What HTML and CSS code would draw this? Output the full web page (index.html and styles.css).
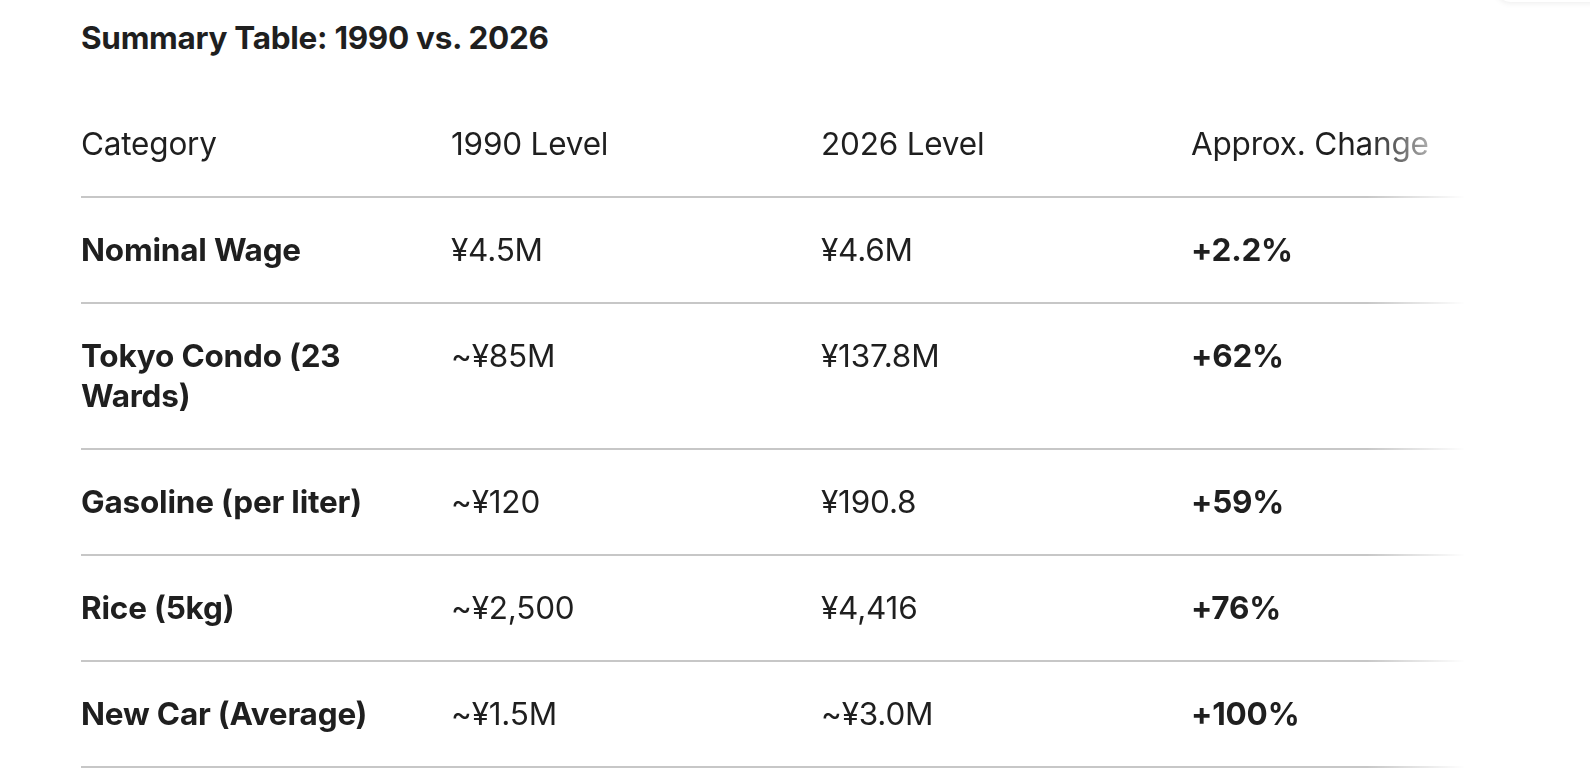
FILE: index.html
```html
<!DOCTYPE html>
<html lang="en">
<head>
<meta charset="utf-8">
<title>Summary Table: 1990 vs. 2026</title>
<link rel="stylesheet" href="styles.css">
</head>
<body>
<div class="floating-card"></div>
<main class="content">
  <h3 class="title">Summary Table: 1990 vs. 2026</h3>
  <div class="table-scroll">
    <table class="summary">
      <thead>
        <tr>
          <th>Category</th>
          <th>1990 Level</th>
          <th>2026 Level</th>
          <th>Approx. Change</th>
        </tr>
      </thead>
      <tbody>
        <tr>
          <td class="cat">Nominal Wage</td>
          <td>¥4.5M</td>
          <td>¥4.6M</td>
          <td class="chg">+2.2%</td>
        </tr>
        <tr>
          <td class="cat">Tokyo Condo (23 Wards)</td>
          <td>~¥85M</td>
          <td>¥137.8M</td>
          <td class="chg">+62%</td>
        </tr>
        <tr>
          <td class="cat">Gasoline (per liter)</td>
          <td>~¥120</td>
          <td>¥190.8</td>
          <td class="chg">+59%</td>
        </tr>
        <tr>
          <td class="cat">Rice (5kg)</td>
          <td>~¥2,500</td>
          <td>¥4,416</td>
          <td class="chg">+76%</td>
        </tr>
        <tr>
          <td class="cat">New Car (Average)</td>
          <td>~¥1.5M</td>
          <td>~¥3.0M</td>
          <td class="chg">+100%</td>
        </tr>
      </tbody>
    </table>
  </div>
</main>
</body>
</html>
```

FILE: styles.css
```css
html, body {
  margin: 0;
  padding: 0;
  background: #ffffff;
}

body {
  font-family: "Inter", "Noto Sans", "Liberation Sans", sans-serif;
  color: #1f1f1f;
  position: relative;
  overflow: hidden;
  height: 780px;
}

.floating-card {
  position: absolute;
  top: -60px;
  right: -30px;
  width: 125px;
  height: 62px;
  border-radius: 16px;
  background: #ffffff;
  box-shadow: 0 1px 6px rgba(0, 0, 0, 0.08);
}

.content {
  padding: 18px 0 0 81px;
}

.title {
  margin: 0 0 34px 0;
  font-size: 31.5px;
  line-height: 40px;
  font-weight: 700;
  letter-spacing: -0.3px;
}

.table-scroll {
  width: 1384px;
  overflow: hidden;
  -webkit-mask-image: linear-gradient(to right, #000 calc(100% - 98px), transparent 100%);
  mask-image: linear-gradient(to right, #000 calc(100% - 98px), transparent 100%);
}

.summary {
  border-collapse: collapse;
  width: 1480px;
  table-layout: fixed;
}

.summary th,
.summary td {
  box-sizing: border-box;
  width: 370px;
  padding: 32px 24px 32px 0;
  font-size: 31.5px;
  line-height: 40px;
  text-align: left;
  vertical-align: top;
  border-bottom: 2px solid #c7c7c7;
  letter-spacing: -0.2px;
}

.summary th {
  font-weight: 400;
}

.summary td {
  font-weight: 400;
}

.summary td.cat,
.summary td.chg {
  font-weight: 700;
}
```
